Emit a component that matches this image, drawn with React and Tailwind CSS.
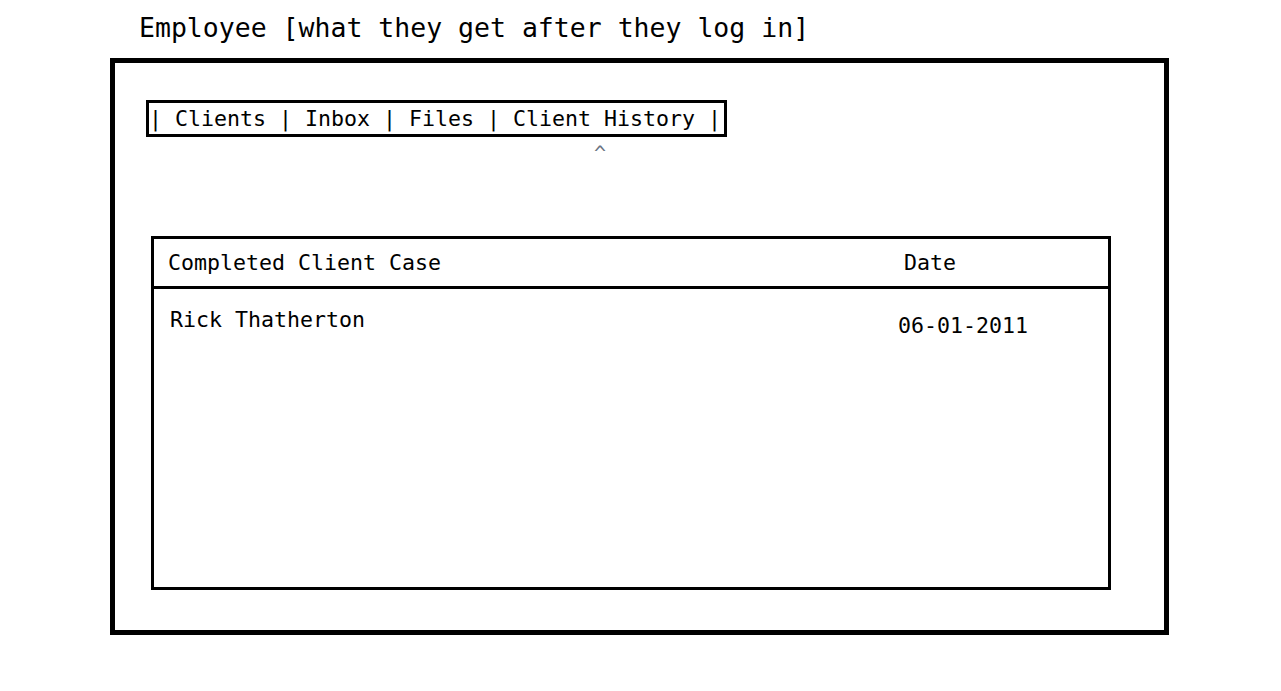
export default function App() {
  return (
    <div className="w-[1281px] h-[691px] bg-white text-black font-['DejaVu_Sans_Mono',monospace] overflow-hidden">
      <div className="pl-[139px] pt-[12px] h-[58px] text-[26.5px] leading-[32px] whitespace-pre">
        Employee [what they get after they log in]
      </div>
      <div className="ml-[110px] w-[1059px] h-[577px] border-[5px] border-black">
        <div className="ml-[31px] mt-[37px] w-[581px] h-[37px] border-[3px] border-black flex items-center pl-[0px] text-[21.6px] leading-[28px] whitespace-pre">
          | Clients | Inbox | Files | Client History |
        </div>
        <div className="h-[24px] pl-[479px] pt-[6px] text-[20px] leading-[20px] text-gray-500">^</div>
        <div className="ml-[36px] mt-[75px] w-[960px] h-[354px] border-[3px] border-black flex flex-col text-[21.6px] leading-[28px] whitespace-pre">
          <div className="h-[50px] border-b-[3px] border-black flex items-center">
            <div className="pl-[14px] w-[750px]">Completed Client Case</div>
            <div>Date</div>
          </div>
          <div className="flex">
            <div className="pl-[16px] pt-[17px] w-[744px]">Rick Thatherton</div>
            <div className="pt-[23px]">06-01-2011</div>
          </div>
        </div>
      </div>
    </div>
  );
}
